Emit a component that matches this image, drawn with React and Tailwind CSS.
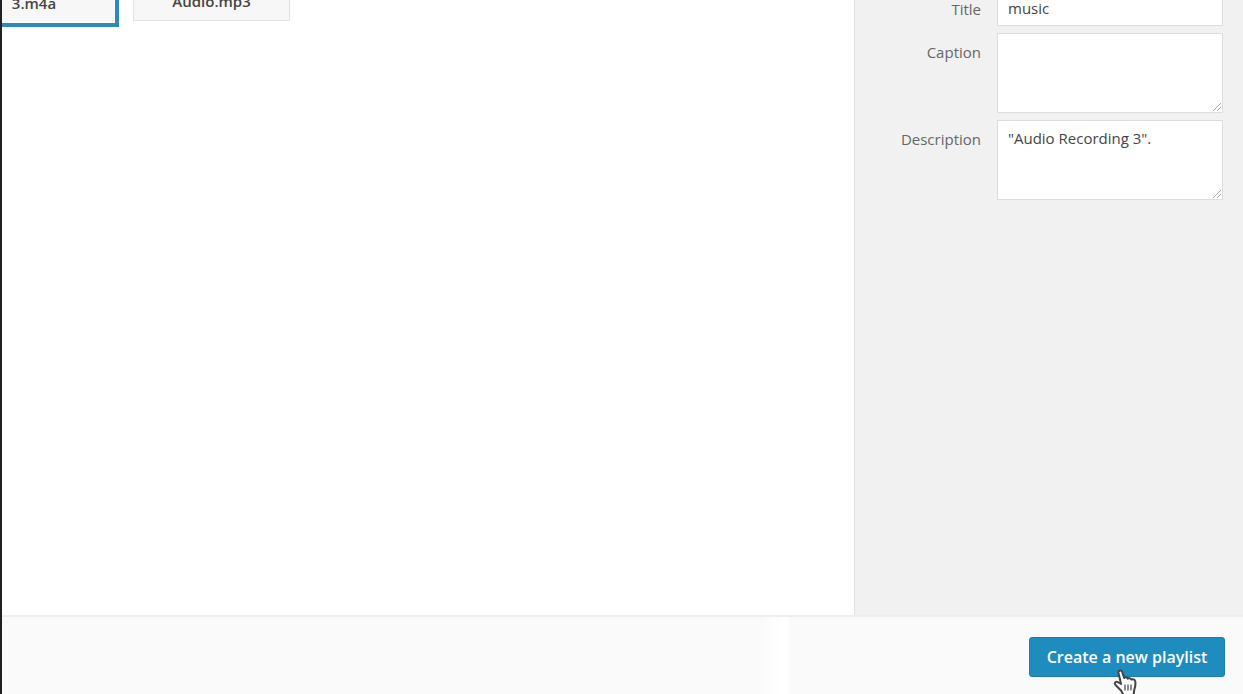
import React, { useState } from 'react';

const fieldClass = 'block w-full border border-[#dddddd] bg-white px-[10px] text-[15px] text-[#444444] outline-none';

function Attachment({ name, selected }) {
  return (
    <li className={selected ? 'w-[170px] border-4 border-[#2a8cb8] p-px' : 'mb-[6px] w-[157px] border border-[#e2e2e2]'}>
      <button className="block h-10 w-full bg-[#f7f7f7] pt-[2px] text-center text-[15px] leading-5 font-semibold text-[#444444]">
        {name}
      </button>
    </li>
  );
}

function Field({ id, label, children }) {
  return (
    <div className="flex items-start gap-4">
      <label htmlFor={id} className="flex-1 pt-[9px] text-right text-[15px] leading-5 text-[#666666]">
        {label}
      </label>
      <div className="w-[226px]">{children}</div>
    </div>
  );
}

function ResizeGrip() {
  return (
    <svg className="pointer-events-none absolute right-[2px] bottom-[2px] h-2 w-2" viewBox="0 0 8 8" fill="none" stroke="#aaaaaa">
      <path d="M0 8 8 0M4 8l4-4" />
    </svg>
  );
}

function HandCursor() {
  return (
    <svg className="pointer-events-none absolute top-8 left-[84px] h-[28px] w-[25px]" viewBox="0 0 25 28" fill="#ffffff" stroke="#444444" strokeWidth="2" strokeLinejoin="round">
      <path d="M8 15 5.500 4C5 1.300 8.500.5 9.200 3L11.200 9c1-1.200 3-.8 3.500.7 1-1 3-.7 3.500.8 1.500-.8 3.700 0 4 1.800.6 3 .3 5.200-.9 8.200L20.500 26H10.500L8 21.500 3 16.500C.5 14 3 11.500 5.500 13.500Z" />
      <path d="M12 15.500v6M15 15.500v6M18 15.500v6" strokeWidth="1.200" />
    </svg>
  );
}

export default function App() {
  const [title, setTitle] = useState('music');
  const [caption, setCaption] = useState('');
  const [description, setDescription] = useState('"Audio Recording 3".');

  return (
    <div className="flex min-h-screen flex-col overflow-hidden border-l-2 border-[#202020] bg-white font-['Open_Sans','Noto_Sans',sans-serif]">
      <div className="flex flex-1">
        <main className="flex-1 overflow-hidden">
          <ul className="-mt-[23px] -ml-[53px] flex items-end gap-[14px]">
            <Attachment name="3.m4a" selected />
            <Attachment name="Audio.mp3" />
          </ul>
        </main>
        <aside className="w-[389px] overflow-hidden border-l border-[#e2e2e2] bg-[#f1f1f1] pr-5">
          <form className="-mt-[10px] flex flex-col gap-[7px]">
            <Field id="title" label="Title">
              <input id="title" type="text" className={`${fieldClass} h-9`} value={title} onChange={e => setTitle(e.target.value)} />
            </Field>
            <Field id="caption" label="Caption">
              <div className="relative">
                <textarea id="caption" className={`${fieldClass} h-20 resize-none py-[7px] leading-5`} value={caption} onChange={e => setCaption(e.target.value)} />
                <ResizeGrip />
              </div>
            </Field>
            <Field id="description" label="Description">
              <div className="relative">
                <textarea id="description" className={`${fieldClass} h-20 resize-none py-[7px] leading-5`} value={description} onChange={e => setDescription(e.target.value)} />
                <ResizeGrip />
              </div>
            </Field>
          </form>
        </aside>
      </div>

      <footer className="flex h-[79px] border-t-2 border-[#eeeeee] bg-[#fafafa]">
        <div className="flex-1" />
        <div className="w-5 bg-linear-to-r from-[#fafafa] to-white" />
        <div className="w-2 bg-white" />
        <div className="flex w-[454px] items-center justify-end pt-[2px] pr-[18px]">
          <div className="relative">
            <button className="block h-10 w-[196px] rounded-[3px] border border-[#1b7dab] bg-[#1e8cbe] text-base font-semibold text-white">
              Create a new playlist
            </button>
            <HandCursor />
          </div>
        </div>
      </footer>
    </div>
  );
}
